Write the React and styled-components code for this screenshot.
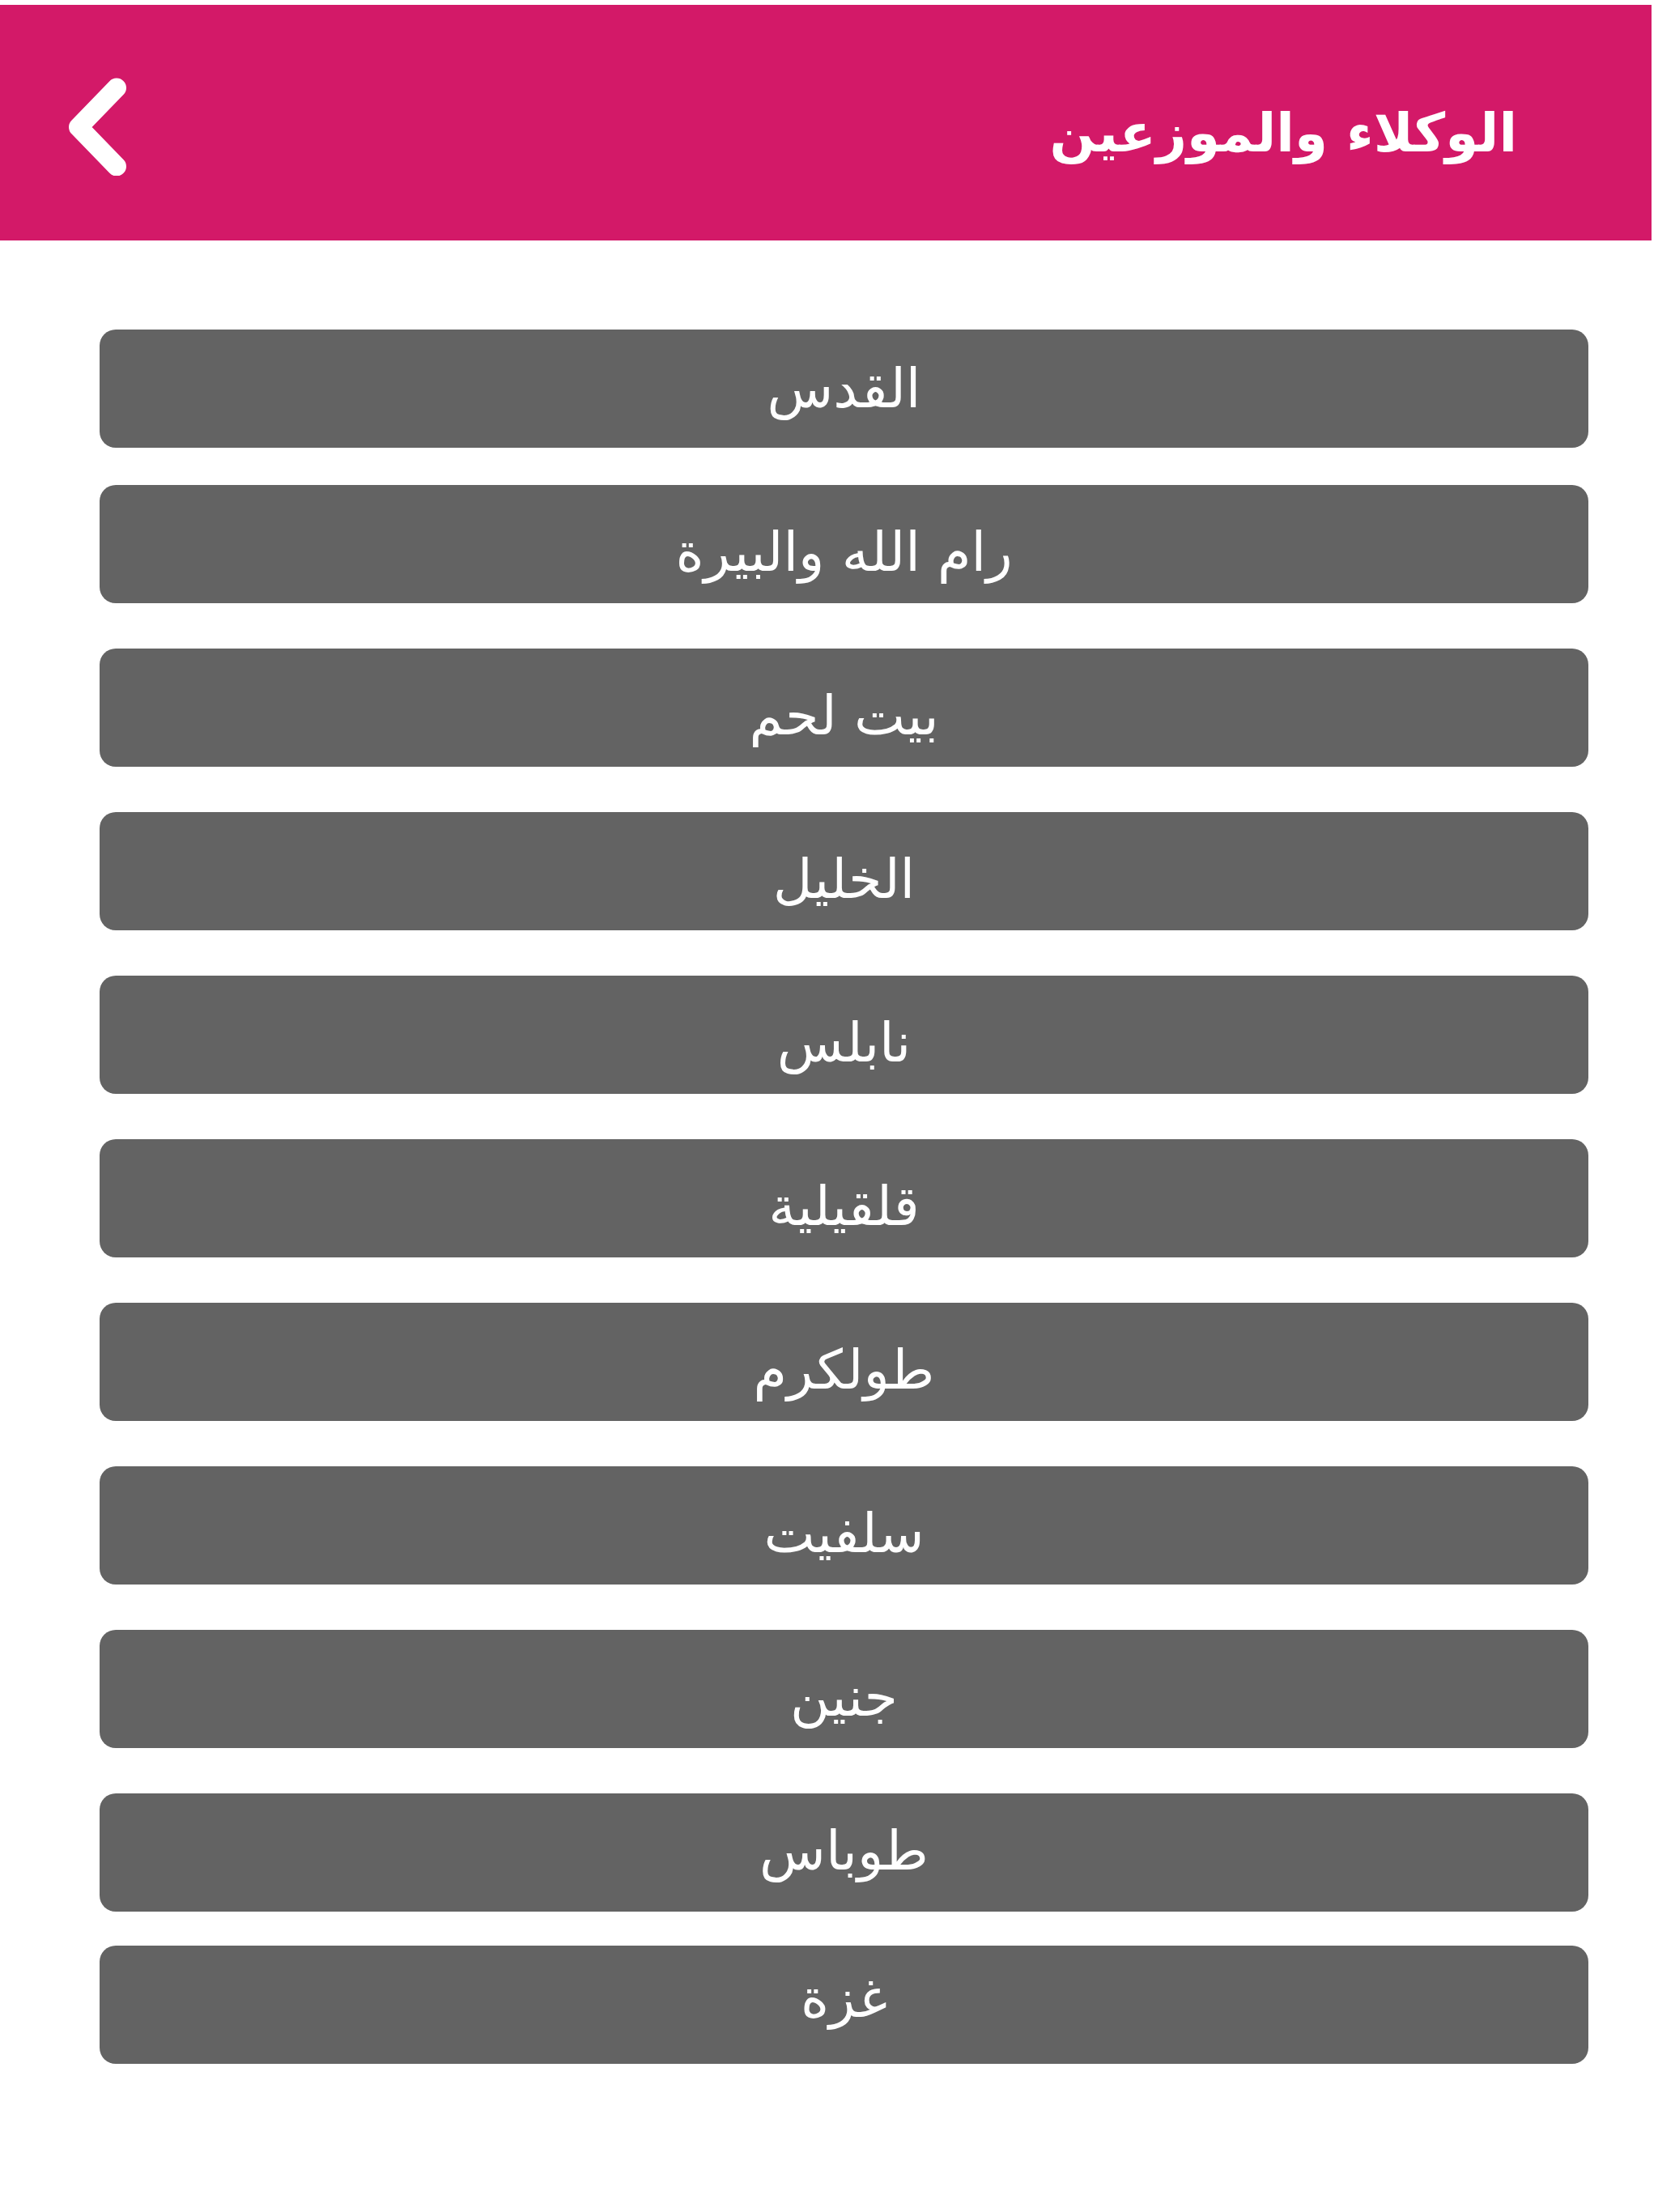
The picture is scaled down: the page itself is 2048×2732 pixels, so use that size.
import React from "react";
import styled, { createGlobalStyle } from "styled-components";

const Global = createGlobalStyle`
  html, body {
    margin: 0;
    padding: 0;
    background: #ffffff;
  }
  body {
    font-family: "DejaVu Sans", "Noto Sans", sans-serif;
  }
`;

const Page = styled.div`
  width: 2048px;
  min-height: 2732px;
  background: #ffffff;
  padding-top: 6px;
  box-sizing: border-box;
`;

const Header = styled.header`
  width: 2040px;
  height: 291px;
  background: #d31968;
  display: flex;
  align-items: center;
  justify-content: space-between;
  box-sizing: border-box;
  padding: 0 166px 0 70px;
`;

const BackButton = styled.button`
  background: none;
  border: none;
  padding: 0;
  margin: 0;
  width: 100px;
  height: 130px;
  display: flex;
  align-items: center;
  justify-content: flex-start;
  cursor: pointer;
`;

const Title = styled.h1`
  margin: 26px 0 0;
  font-size: 66px;
  font-weight: 700;
  color: #ffffff;
  direction: rtl;
  line-height: 1;
  font-family: "DejaVu Sans", sans-serif;
`;

const List = styled.nav`
  display: flex;
  flex-direction: column;
  padding: 0 86px 0 123px;
`;

const Item = styled.button`
  margin-top: ${(p) => p.$gap}px;
  height: 146px;
  width: 100%;
  border: none;
  border-radius: 20px;
  background: #636363;
  color: #ffffff;
  font-family: "DejaVu Sans", sans-serif;
  font-size: 67px;
  font-weight: 400;
  line-height: 1;
  display: flex;
  justify-content: center;
  align-items: center;
  direction: rtl;
  box-sizing: border-box;
  cursor: pointer;
  ${(p) =>
    p.$offset >= 0
      ? `padding: ${p.$offset * 2}px 0 0;`
      : `padding: 0 0 ${-p.$offset * 2}px;`}
`;

const cities = [
  { name: "القدس", gap: 110, offset: 0 },
  { name: "رام الله والبيرة", gap: 46, offset: 10 },
  { name: "بيت لحم", gap: 56, offset: 10 },
  { name: "الخليل", gap: 56, offset: 10 },
  { name: "نابلس", gap: 56, offset: 10 },
  { name: "قلقيلية", gap: 56, offset: 10 },
  { name: "طولكرم", gap: 56, offset: 10 },
  { name: "سلفيت", gap: 56, offset: 10 },
  { name: "جنين", gap: 56, offset: 10 },
  { name: "طوباس", gap: 56, offset: -2 },
  { name: "غزة", gap: 42, offset: -8 },
];

export default function App() {
  return (
    <Page>
      <Global />
      <Header>
        <BackButton aria-label="back">
          <svg width="100" height="130" viewBox="0 0 100 130">
            <polyline
              points="74,21.5 27,70 74,118.5"
              fill="none"
              stroke="#ffffff"
              strokeWidth="24"
              strokeLinecap="round"
              strokeLinejoin="round"
            />
          </svg>
        </BackButton>
        <Title>الوكلاء والموزعين</Title>
      </Header>
      <List>
        {cities.map((c) => (
          <Item key={c.name} $gap={c.gap} $offset={c.offset}>
            {c.name}
          </Item>
        ))}
      </List>
    </Page>
  );
}
